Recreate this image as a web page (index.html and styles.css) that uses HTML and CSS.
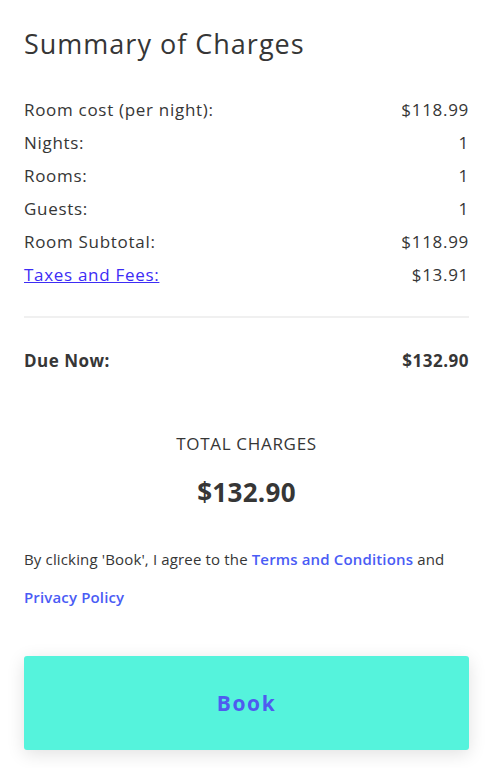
FILE: index.html
```html
<!DOCTYPE html>
<html lang="en">
<head>
    <meta charset="UTF-8">
    <meta name="viewport" content="width=device-width, initial-scale=1.0">
    <title>Summary of Charges</title>
    <link rel="stylesheet" href="styles.css">
</head>
<body>
    <div class="summary">
        <h1 class="title">Summary of Charges</h1>

        <div class="rows">
            <div class="row"><span>Room cost (per night):</span><span>$118.99</span></div>
            <div class="row"><span>Nights:</span><span>1</span></div>
            <div class="row"><span>Rooms:</span><span>1</span></div>
            <div class="row"><span>Guests:</span><span>1</span></div>
            <div class="row"><span>Room Subtotal:</span><span>$118.99</span></div>
            <div class="row"><a href="#" class="taxes">Taxes and Fees:</a><span>$13.91</span></div>
        </div>

        <div class="row due"><span>Due Now:</span><span>$132.90</span></div>

        <div class="total">
            <div class="total-label">TOTAL CHARGES</div>
            <div class="total-amount">$132.90</div>
        </div>

        <p class="terms">By clicking 'Book', I agree to the <a href="#">Terms and Conditions</a> and <a href="#">Privacy Policy</a></p>
    </div>

    <div class="footer">
        <button class="book">Book</button>
    </div>
</body>
</html>
```

FILE: styles.css
```css
* {
    margin: 0;
    padding: 0;
    box-sizing: border-box;
}

body {
    font-family: "Open Sans", Arial, sans-serif;
    color: #363636;
    background-color: white;
}

.summary {
    padding: 0 24px;
}

.title {
    font-size: 27px;
    font-weight: 400;
    line-height: 36px;
    padding-top: 26px;
    margin-bottom: 31px;
    letter-spacing: 1px;
}

.rows {
    padding-bottom: 25px;
    border-bottom: 2px solid #f0f0f0;
}

.row {
    display: flex;
    justify-content: space-between;
    font-size: 17px;
    line-height: 33px;
    letter-spacing: 0.7px;
}

.taxes {
    color: #3d2cf5;
    text-decoration: underline;
}

.due {
    font-weight: 700;
    margin-top: 26px;
    letter-spacing: 0.5px;
}

.total {
    text-align: center;
    margin-top: 55px;
}

.total-label {
    font-size: 17px;
    line-height: 24px;
    letter-spacing: 0.7px;
}

.total-amount {
    font-size: 26px;
    font-weight: 700;
    line-height: 34px;
    margin-top: 19px;
    letter-spacing: 0.3px;
}

.terms {
    font-size: 15px;
    line-height: 38px;
    margin-top: 31px;
    letter-spacing: 0.15px;
}

.terms a {
    color: #4a5cf5;
    font-weight: 600;
    text-decoration: none;
}

.footer {
    padding: 40px 24px 18px;
}

.book {
    display: block;
    width: 100%;
    height: 94px;
    border: none;
    border-radius: 3px;
    background-color: #55f3dc;
    color: #4f5bef;
    font-family: "Open Sans", Arial, sans-serif;
    font-size: 21px;
    font-weight: 700;
    letter-spacing: 1.6px;
    box-shadow: 0 4px 18px rgba(0, 0, 0, 0.12);
    cursor: pointer;
}
```
